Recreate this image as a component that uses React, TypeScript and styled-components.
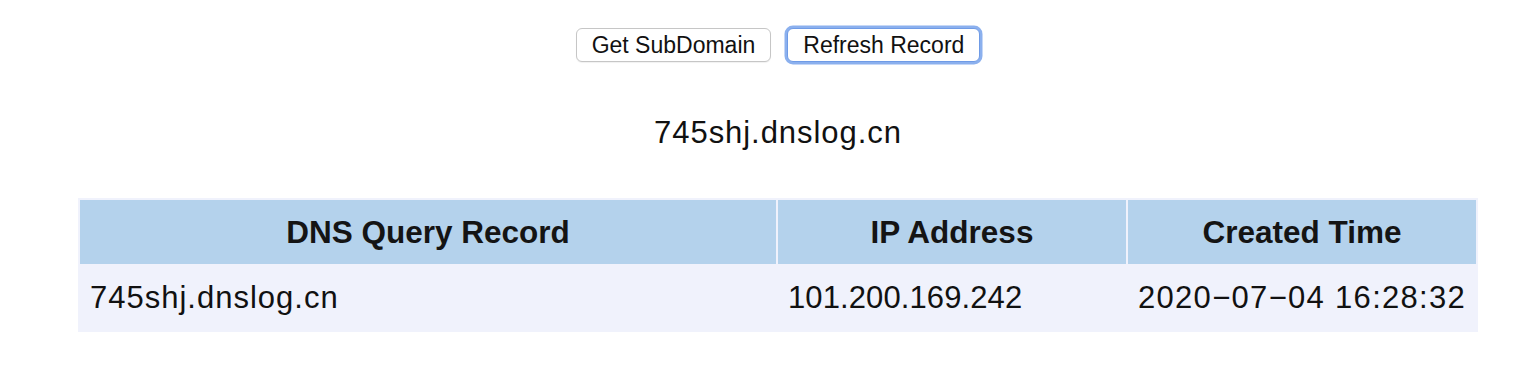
import React from 'react';
import styled, { createGlobalStyle } from 'styled-components';

const GlobalStyle = createGlobalStyle`
    body {
        margin: 0;
        background: #ffffff;
        font-family: "Liberation Sans", Arial, sans-serif;
        color: #111;
    }
`;

const Container = styled.div`
    width: 1400px;
    margin-left: 78px;
    display: flex;
    flex-direction: column;
    align-items: center;
    padding-top: 28px;
`;

const Toolbar = styled.div`
    display: flex;
    gap: 16px;
    align-items: center;
`;

const Button = styled.button<{ $focused?: boolean }>`
    height: 34px;
    padding: 0 15px;
    font-family: "Liberation Sans", Arial, sans-serif;
    font-size: 23px;
    color: #111;
    background: #fff;
    border: 1px solid ${({ $focused }) => ($focused ? '#6f9be6' : '#c6c6c6')};
    border-radius: 6px;
    box-shadow: ${({ $focused }) => ($focused ? '0 0 0 2.5px #8bb0ee' : '0 1px 1px rgba(0,0,0,0.06)')};
    line-height: 1;
`;

const Domain = styled.p`
    margin: 52px 0 0;
    font-size: 31px;
    line-height: 38px;
    letter-spacing: 0.95px;
`;

const Table = styled.table`
    width: 1400px;
    margin-top: 46px;
    border-spacing: 2px;
    background: #f0f2fc;
    table-layout: fixed;
`;

const Head = styled.th<{ $width: string }>`
    width: ${({ $width }) => $width};
    height: 64px;
    padding: 0;
    background: #b4d2ec;
    color: #141414;
    font-size: 31.5px;
    font-weight: 700;
    text-align: center;
`;

const Cell = styled.td<{ $spacing?: number }>`
    height: 64px;
    padding: 0 0 0 10px;
    font-size: 31px;
    letter-spacing: ${({ $spacing }) => $spacing ?? 0.4}px;
    text-align: left;
    white-space: nowrap;
`;

const records = [
    { domain: '745shj.dnslog.cn', ip: '101.200.169.242', time: '2020−07−04 16:28:32' },
];

const App = () => {
    return (
        <>
            <GlobalStyle />
            <Container>
                <Toolbar>
                    <Button>Get SubDomain</Button>
                    <Button $focused>Refresh Record</Button>
                </Toolbar>

                <Domain>745shj.dnslog.cn</Domain>

                <Table>
                    <thead>
                        <tr>
                            <Head $width='50%'>DNS Query Record</Head>
                            <Head $width='25%'>IP Address</Head>
                            <Head $width='25%'>Created Time</Head>
                        </tr>
                    </thead>
                    <tbody>
                        {records.map(r => (
                            <tr key={r.domain + r.time}>
                                <Cell $spacing={1}>{r.domain}</Cell>
                                <Cell $spacing={0.1}>{r.ip}</Cell>
                                <Cell $spacing={1.3}>{r.time}</Cell>
                            </tr>
                        ))}
                    </tbody>
                </Table>
            </Container>
        </>
    );
};

export default App;
